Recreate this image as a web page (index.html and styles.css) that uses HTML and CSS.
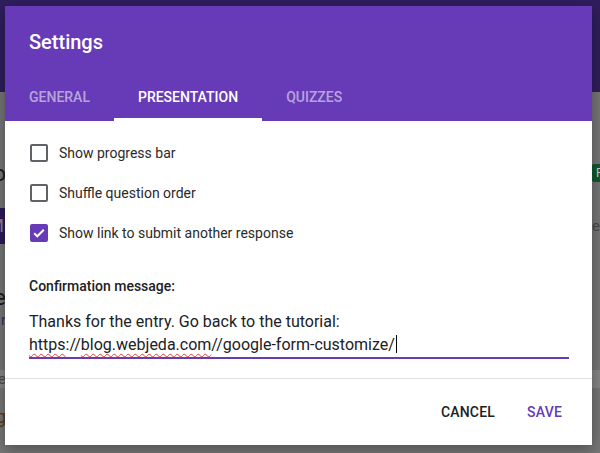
FILE: index.html
```html
<!DOCTYPE html>
<html>
<head>
<meta charset="utf-8">
<link rel="stylesheet" href="styles.css">
</head>
<body>
<div class="page">
  <div class="page-top"></div>
  <div class="page-body">
    <div class="bg-row r1">
      <div class="frag"><span class="t-big">Do</span></div>
      <div class="frag-r"><span class="badge">Fo</span></div>
    </div>
    <div class="bg-row r2">
      <div class="frag"><span class="purple-block">M</span></div>
      <div class="frag-r"><span class="t-gray">es</span></div>
    </div>
    <div class="bg-row r3">
      <div class="frag"><span class="t-big">e</span></div>
    </div>
    <div class="bg-row r4">
      <div class="frag"><span class="t-purple">r</span></div>
    </div>
    <div class="bg-row r5">
      <div class="frag"><span class="t-gray">e</span></div>
    </div>
    <div class="bg-row r6">
      <div class="frag"><span class="t-brown">g</span></div>
    </div>
  </div>
</div>

<div class="dialog">
  <div class="dlg-header">
    <div class="dlg-title">Settings</div>
    <div class="tabs">
      <div class="tab">General</div>
      <div class="tab active">Presentation</div>
      <div class="tab">Quizzes</div>
    </div>
  </div>
  <div class="dlg-body">
    <div class="opt">
      <span class="cb"></span>
      <span class="opt-label">Show progress bar</span>
    </div>
    <div class="opt">
      <span class="cb"></span>
      <span class="opt-label">Shuffle question order</span>
    </div>
    <div class="opt">
      <span class="cb checked">
        <svg width="18" height="18" viewBox="0 0 18 18"><path d="M4.2 9.2l3.1 3.1 6.5-6.6" fill="none" stroke="#fff" stroke-width="2"/></svg>
      </span>
      <span class="opt-label">Show link to submit another response</span>
    </div>
    <div class="conf-label">Confirmation message:</div>
    <div class="conf-text">
      <div>Thanks for the entry. Go back to the tutorial:</div>
      <div><span class="sp">https</span>://<span class="sp">blog.webjeda.com</span>//google-form-customize/<span class="caret"></span></div>
    </div>
  </div>
  <div class="dlg-footer">
    <div class="btn">Cancel</div>
    <div class="btn primary">Save</div>
  </div>
</div>
</body>
</html>
```

FILE: styles.css
```css
html, body {
  margin: 0;
  padding: 0;
}
body {
  width: 600px;
  height: 453px;
  overflow: hidden;
  font-family: Roboto, "Liberation Sans", Arial, sans-serif;
  background: #767676;
  position: relative;
}
.page {
  display: flex;
  flex-direction: column;
  height: 453px;
}
.page-top {
  height: 92px;
  background: #2f1e5d;
  flex: none;
}
.page-body {
  flex: 1;
  background: #767676;
  display: flex;
  flex-direction: column;
  padding-top: 71px;
}
.bg-row {
  display: flex;
  justify-content: space-between;
  align-items: center;
}
.frag {
  width: 6px;
  overflow: hidden;
  display: flex;
  justify-content: flex-end;
  white-space: nowrap;
}
.frag-r {
  width: 8px;
  overflow: hidden;
  display: flex;
  justify-content: flex-start;
  white-space: nowrap;
}
.r1 { height: 20px; }
.r2 { height: 36px; margin-top: 25px; }
.r3 { height: 20px; margin-top: 43px; }
.r4 { height: 16px; margin-top: 5px; }
.r5 { height: 18px; margin-top: 42px; background: #858585; }
.r6 { height: 22px; margin-top: 17px; }
.t-big { font-size: 22px; color: #1a1a1a; }
.t-purple { font-size: 15px; color: #3a2a66; }
.t-gray { font-size: 15px; color: #4a4a4a; }
.t-brown { font-size: 18px; color: #5a3a12; }
.badge {
  background: #0f5a2a;
  color: #cfcfcf;
  font-size: 12px;
  padding: 1px 4px;
  height: 16px;
  line-height: 16px;
  border-radius: 2px;
}
.purple-block {
  background: #2c1a55;
  color: #8a80a0;
  font-size: 18px;
  height: 36px;
  line-height: 36px;
  padding: 0 2px;
}

/* Dialog */
.dialog {
  position: absolute;
  left: 5px;
  top: 6px;
  width: 587px;
  height: 439px;
  background: #fff;
  display: flex;
  flex-direction: column;
  box-shadow: 0 4px 14px rgba(0,0,0,0.35);
}
.dlg-header {
  background: #673ab7;
  color: #fff;
  flex: none;
}
.dlg-title {
  font-size: 20px;
  font-weight: 500;
  line-height: 24px;
  padding: 24px 24px 18px;
}
.tabs {
  display: flex;
  height: 49px;
}
.tab {
  padding: 0 24px;
  font-size: 14px;
  font-weight: 500;
  text-transform: uppercase;
  color: rgba(255,255,255,0.55);
  display: flex;
  align-items: center;
  box-sizing: border-box;
  border-bottom: 3px solid transparent;
  padding-top: 3px;
}
.tab.active {
  color: #fff;
  border-bottom-color: #fff;
}
.dlg-body {
  flex: 1;
  padding: 12px 23px 0 24px;
  display: flex;
  flex-direction: column;
}
.opt {
  height: 40px;
  display: flex;
  align-items: center;
}
.cb {
  width: 18px;
  height: 18px;
  box-sizing: border-box;
  border: 2px solid #5f6368;
  border-radius: 2px;
  margin-left: 1px;
  margin-right: 11px;
  flex: none;
  position: relative;
}
.cb.checked {
  background: #673ab7;
  border-color: #673ab7;
}
.cb.checked svg {
  position: absolute;
  left: -2px;
  top: -2px;
}
.opt-label {
  font-size: 14px;
  color: #2a2a2a;
}
.conf-label {
  margin-top: 25px;
  font-size: 14px;
  font-weight: 500;
  line-height: 16px;
  color: #202124;
}
.conf-text {
  margin-top: 16px;
  font-size: 16px;
  line-height: 23px;
  color: #202124;
  border-bottom: 2px solid #673ab7;
  padding-bottom: 1px;
}
.sp {
  text-decoration: underline wavy #e53935;
  text-decoration-thickness: 1px;
  text-underline-offset: 3px;
}
.caret {
  display: inline-block;
  width: 1px;
  height: 18px;
  background: #000;
  vertical-align: -3px;
  margin-left: 1px;
}
.dlg-footer {
  flex: none;
  height: 66px;
  border-top: 1px solid #e0e0e0;
  display: flex;
  justify-content: flex-end;
  align-items: center;
  padding-right: 14px;
}
.btn {
  padding: 8px 16px;
  font-size: 14px;
  font-weight: 500;
  text-transform: uppercase;
  color: #202124;
  letter-spacing: 0.2px;
}
.btn.primary {
  color: #673ab7;
}
```
